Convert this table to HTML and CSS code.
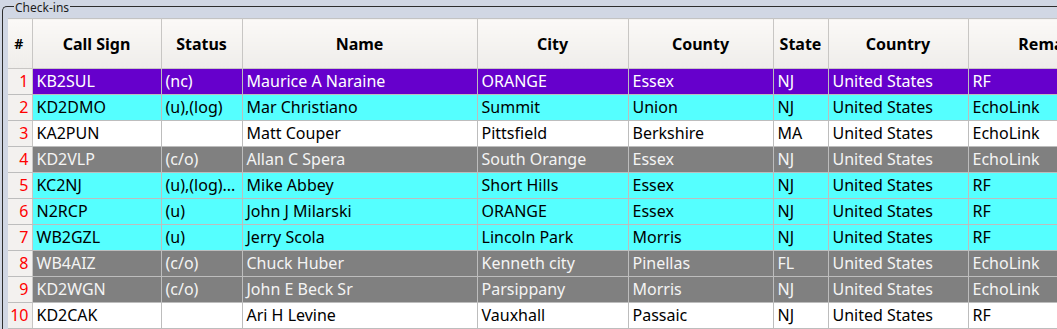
FILE: index.html
```html
<!DOCTYPE html>
<html>
<head>
<meta charset="utf-8">
<link rel="stylesheet" href="styles.css">
</head>
<body>
<div class="window">
  <section class="group">
    <div class="group-title">Check-ins</div>
    <div class="table-clip">
      <table class="grid">
        <colgroup>
          <col class="c-num"><col class="c-call"><col class="c-status"><col class="c-name"><col class="c-city"><col class="c-county"><col class="c-state"><col class="c-country"><col class="c-remarks">
        </colgroup>
        <thead>
          <tr>
            <th class="hnum">#</th><th>Call Sign</th><th>Status</th><th>Name</th><th>City</th><th>County</th><th>State</th><th>Country</th><th>Remarks</th>
          </tr>
        </thead>
        <tbody>
          <tr class="purple"><th class="rn">1</th><td>KB2SUL</td><td>(nc)</td><td>Maurice A Naraine</td><td>ORANGE</td><td>Essex</td><td>NJ</td><td>United States</td><td>RF</td></tr>
          <tr class="cyan"><th class="rn">2</th><td>KD2DMO</td><td>(u),(log)</td><td>Mar Christiano</td><td>Summit</td><td>Union</td><td>NJ</td><td>United States</td><td>EchoLink</td></tr>
          <tr class="white"><th class="rn">3</th><td>KA2PUN</td><td></td><td>Matt Couper</td><td>Pittsfield</td><td>Berkshire</td><td>MA</td><td>United States</td><td>EchoLink</td></tr>
          <tr class="gray"><th class="rn">4</th><td>KD2VLP</td><td>(c/o)</td><td>Allan C Spera</td><td>South Orange</td><td>Essex</td><td>NJ</td><td>United States</td><td>EchoLink</td></tr>
          <tr class="cyan"><th class="rn">5</th><td>KC2NJ</td><td>(u),(log)...</td><td>Mike Abbey</td><td>Short Hills</td><td>Essex</td><td>NJ</td><td>United States</td><td>RF</td></tr>
          <tr class="cyan"><th class="rn">6</th><td>N2RCP</td><td>(u)</td><td>John J Milarski</td><td>ORANGE</td><td>Essex</td><td>NJ</td><td>United States</td><td>RF</td></tr>
          <tr class="cyan"><th class="rn">7</th><td>WB2GZL</td><td>(u)</td><td>Jerry Scola</td><td>Lincoln Park</td><td>Morris</td><td>NJ</td><td>United States</td><td>RF</td></tr>
          <tr class="gray"><th class="rn">8</th><td>WB4AIZ</td><td>(c/o)</td><td>Chuck Huber</td><td>Kenneth city</td><td>Pinellas</td><td>FL</td><td>United States</td><td>EchoLink</td></tr>
          <tr class="gray"><th class="rn">9</th><td>KD2WGN</td><td>(c/o)</td><td>John E Beck Sr</td><td>Parsippany</td><td>Morris</td><td>NJ</td><td>United States</td><td>EchoLink</td></tr>
          <tr class="white"><th class="rn">10</th><td>KD2CAK</td><td></td><td>Ari H Levine</td><td>Vauxhall</td><td>Passaic</td><td>NJ</td><td>United States</td><td>RF</td></tr>
        </tbody>
      </table>
    </div>
  </section>
</div>
</body>
</html>
```
FILE: styles.css
```css
html, body {
  margin: 0;
  padding: 0;
  background: #d1d7e4;
  overflow: hidden;
}
.window {
  width: 1057px;
  height: 329px;
  overflow: hidden;
  font-family: "Noto Sans", "Open Sans", sans-serif;
  padding-top: 6px;
  box-sizing: border-box;
}
.group {
  margin: 0 0 0 2px;
  padding: 0 0 0 5px;
  border: 1px solid #2e2e2e;
  border-right: none;
  border-bottom: none;
  border-radius: 5px 0 0 0;
  width: 1200px;
  height: 400px;
}
.group-title {
  display: table;
  font-size: 12px;
  line-height: 13px;
  height: 13px;
  color: #1c1c1c;
  background: #d1d7e4;
  padding: 0 1px;
  margin: -6px 0 0 6px;
}
.table-clip {
  margin-top: 4px;
}
.grid {
  border-collapse: collapse;
  table-layout: fixed;
  width: 1131px;
  font-size: 16px;
  border-top: 1px solid #c3c3c3;
}
.c-num { width: 24px; }
.c-call { width: 129px; }
.c-status { width: 81px; }
.c-name { width: 235px; }
.c-city { width: 151px; }
.c-county { width: 145px; }
.c-state { width: 55px; }
.c-country { width: 140px; }
.c-remarks { width: 171px; }

.grid thead th {
  height: 49px;
  padding: 0;
  background: linear-gradient(#fbf9f7, #efedea);
  border-right: 1px solid #c8c6c4;
  border-bottom: 1px solid #c8c6c4;
  font-weight: bold;
  color: #000;
  text-align: center;
  white-space: nowrap;
  overflow: hidden;
}
.grid thead th.hnum {
  font-size: 14px;
  padding-right: 2px;
}
.grid tbody td,
.grid tbody th {
  height: 25px;
  padding: 0 4px;
  border-right: 1px solid #bdbdbd;
  border-bottom: 1px solid #bdbdbd;
  white-space: nowrap;
  overflow: hidden;
  text-align: left;
  font-weight: normal;
  line-height: 25px;
}
.grid tbody th.rn {
  background: #f3f1ef;
  color: #ff0000;
  text-align: right;
  padding: 0 3px 0 0;
  border-right: 1px solid #c8c6c4;
}
.purple td { background: #6600cc; color: #ffffff; }
.cyan td { background: #55ffff; color: #000000; }
.white td { background: #ffffff; color: #000000; }
.gray td { background: #808080; color: #f4f4f4; }
```
